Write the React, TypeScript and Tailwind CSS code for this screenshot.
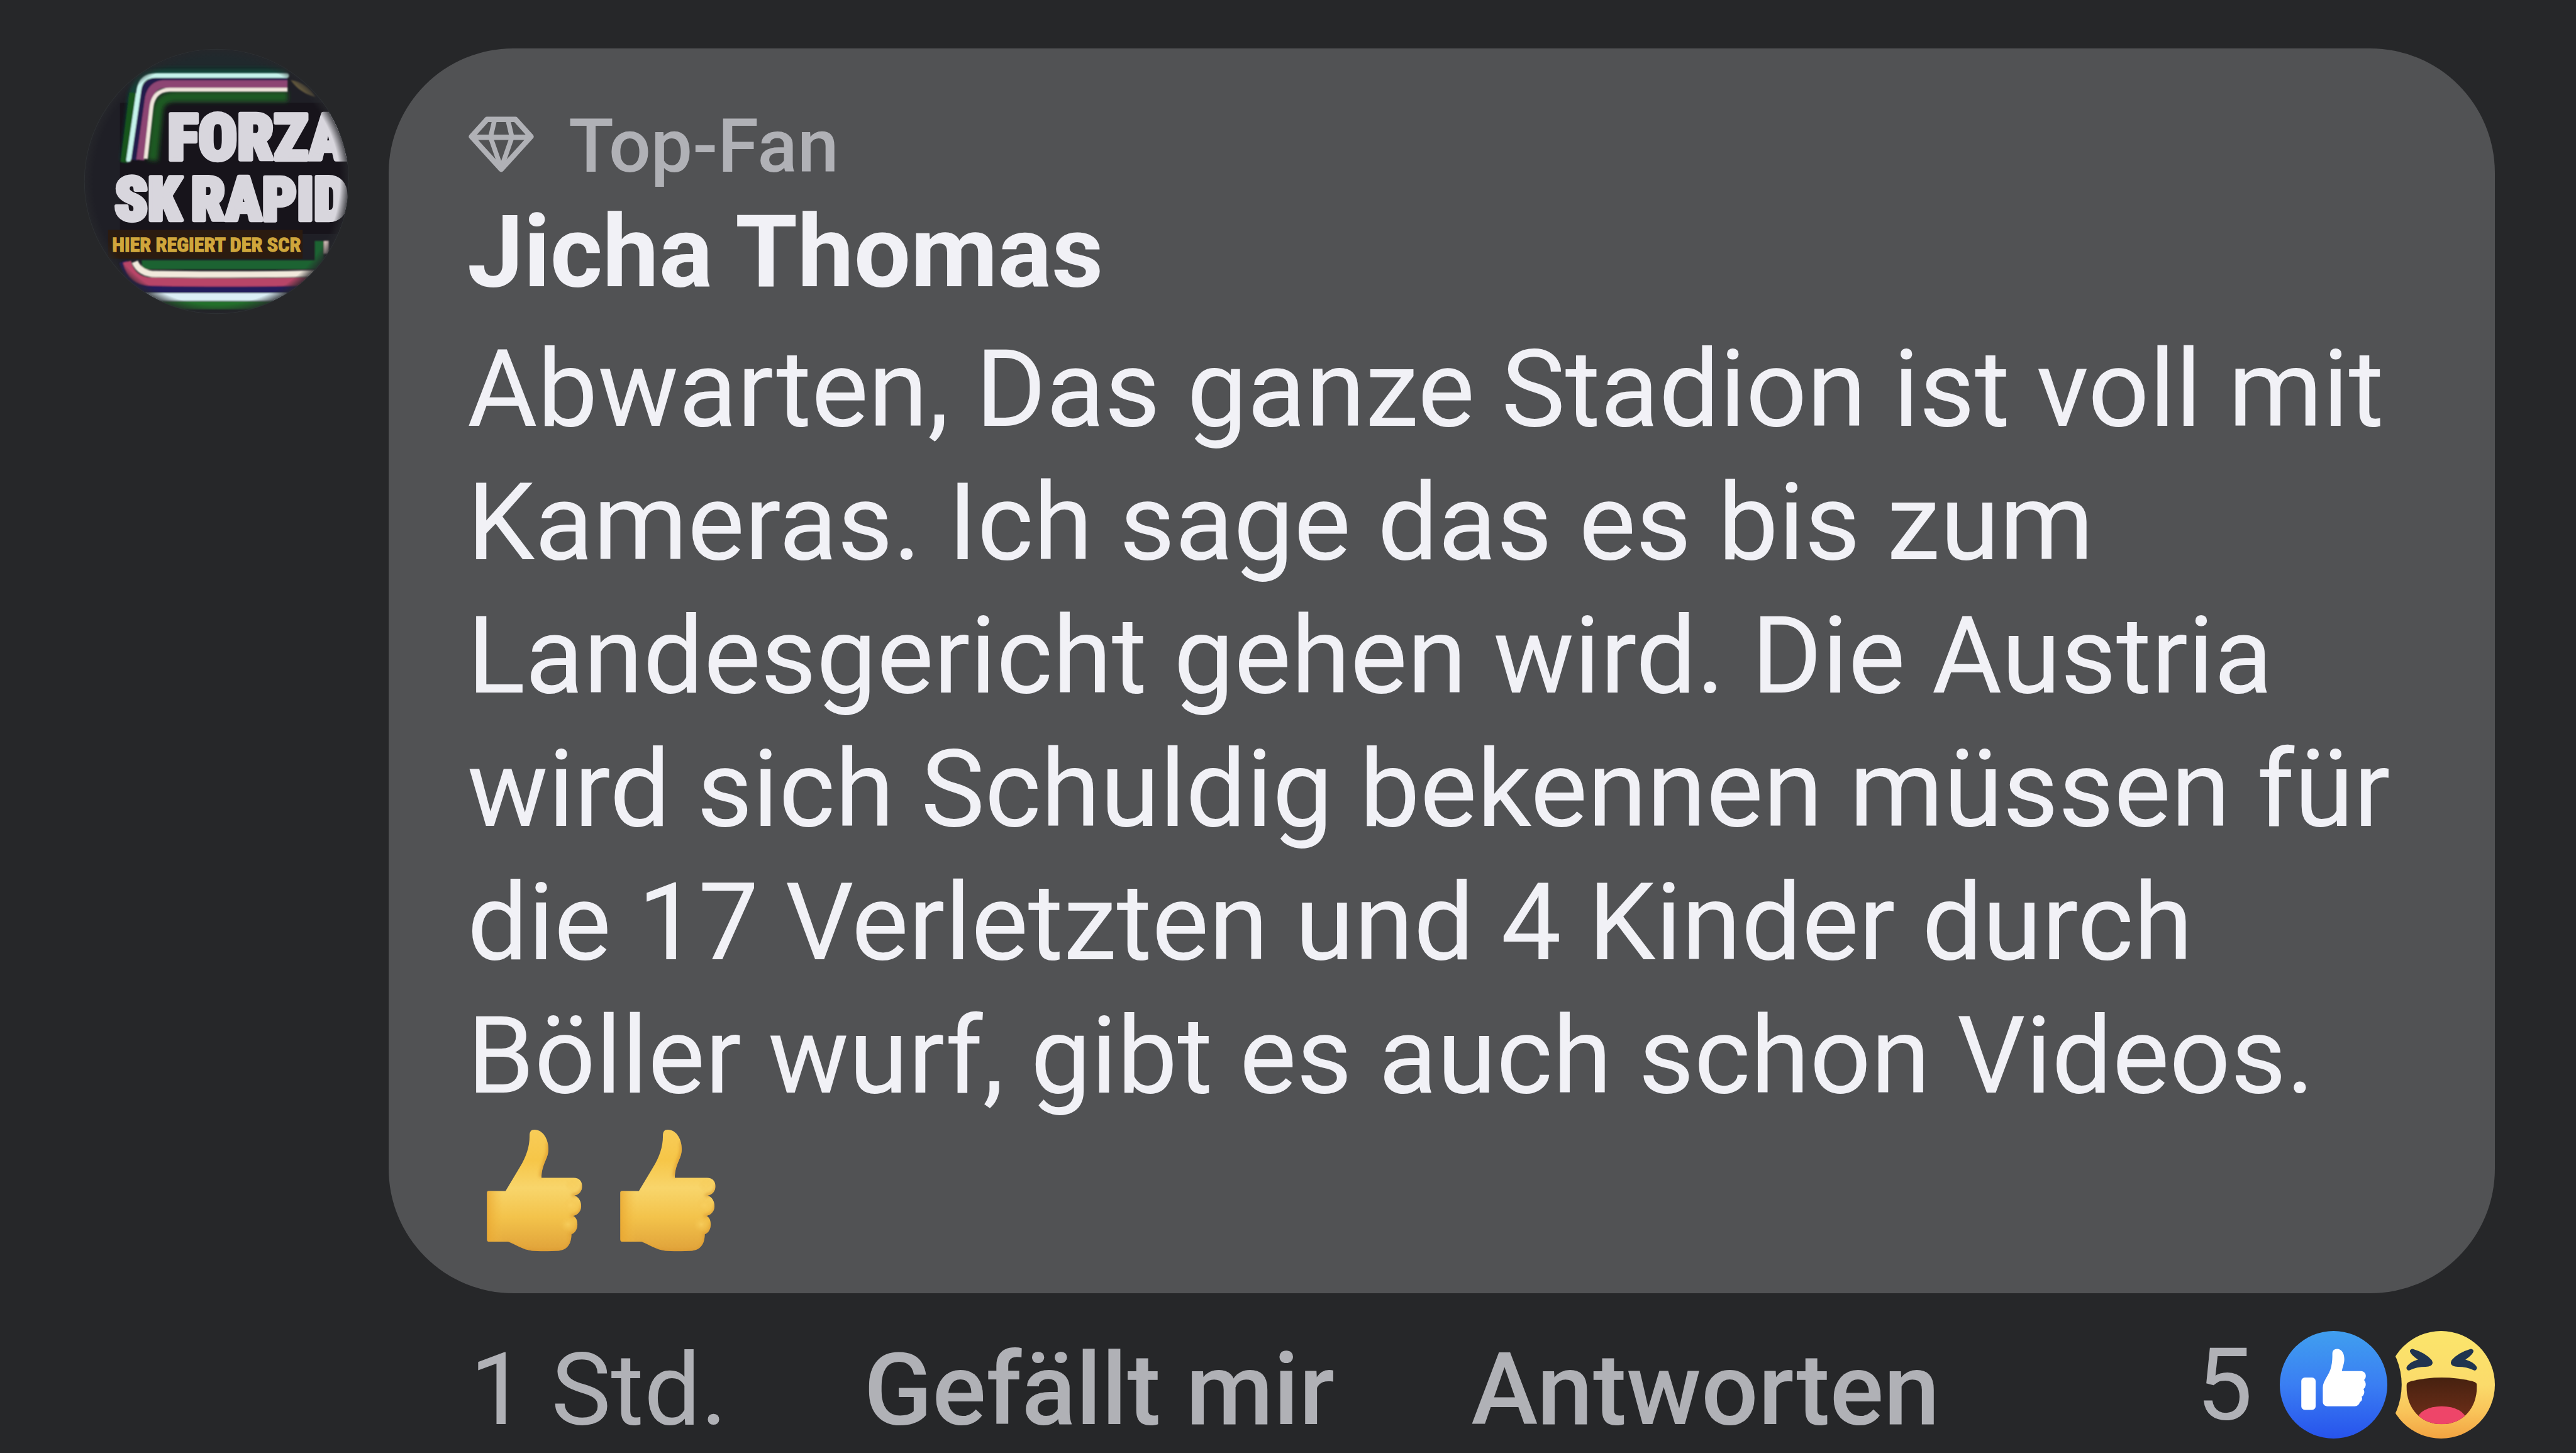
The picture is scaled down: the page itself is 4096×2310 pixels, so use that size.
import React from 'react';

const Avatar = () => (
  <svg viewBox="57 66 1340 1340" className="size-[423px] rounded-full" role="img" aria-label="Profilbild von Jicha Thomas">
    <defs>
      <clipPath id="avatar-clip">
        <circle cx="727" cy="736" r="664" />
      </clipPath>
      <filter id="neon" x="-10%" y="-10%" width="120%" height="120%">
        <feGaussianBlur stdDeviation="4" />
      </filter>
      <filter id="glow" x="-10%" y="-20%" width="120%" height="140%">
        <feGaussianBlur stdDeviation="12" />
      </filter>
      <radialGradient id="rim" cx="0.5" cy="0.5" r="0.5">
        <stop offset="0.93" stopColor="#26272b" stopOpacity="0" />
        <stop offset="1" stopColor="#26272b" stopOpacity="0.85" />
      </radialGradient>
    </defs>
    <circle cx="727" cy="736" r="668" fill="#2d3033" />
    <g clipPath="url(#avatar-clip)">
      <rect x="57" y="66" width="1340" height="1340" fill="#1f1f26" />
      <rect x="240" y="340" width="1160" height="660" fill="#17141b" />
      <rect x="300" y="70" width="800" height="90" fill="#20292d" />

      {/* upper neon tubes */}
      <g fill="none" strokeLinejoin="round">
        <g filter="url(#glow)">
          <path d="M262 630 L300 300 Q320 184 420 184 H1084" stroke="#0f4a3a" strokeWidth="30" />
          <path d="M404 630 L430 380 Q440 310 520 308 H1084" stroke="#1f5a24" strokeWidth="52" />
        </g>
        <g filter="url(#neon)">
          <path d="M260 640 L306 290" stroke="#17551d" strokeWidth="36" />
          <path d="M310 628 L356 300 Q370 232 430 228 H1084" stroke="#241f4b" strokeWidth="36" />
          <path d="M342 628 L386 316 Q400 250 460 246 H1084" stroke="#8d4573" strokeWidth="40" />
          <path d="M284 626 L336 270 Q348 202 420 202 H1080" stroke="#c6f4ec" strokeWidth="24" strokeLinecap="round" />
          <path d="M370 622 L398 370 Q406 276 490 274 H1084" stroke="#f0e6dc" strokeWidth="20" />
        </g>
      </g>
      <path d="M1100 225 C1150 230 1200 265 1225 310 C1180 300 1130 270 1100 225Z" fill="#6d6040" filter="url(#neon)" />

      {/* lower neon tubes */}
      <g fill="none" filter="url(#neon)">
        <path d="M350 1156 H1244 V1035" stroke="#1d6332" strokeWidth="46" />
        <path d="M1280 1035 V1100" stroke="#e6cfc8" strokeWidth="24" />
        <path d="M255 1140 Q300 1278 400 1280 H1180" stroke="#231f5c" strokeWidth="40" />
        <path d="M275 1140 Q300 1240 400 1240 Q740 1248 1180 1240" stroke="#b84467" strokeWidth="42" />
        <path d="M315 1140 Q340 1202 420 1202 Q740 1208 1220 1200" stroke="#f2e9dc" strokeWidth="32" />
        <path d="M360 1318 H1080" stroke="#dbeef6" strokeWidth="40" />
        <path d="M440 1360 H1020" stroke="#23702a" strokeWidth="42" />
      </g>

      {/* banner lettering */}
      <g className="font-['Roboto_Condensed','Liberation_Sans_Narrow','Roboto',sans-serif] font-black" fill="#d8d6dd" stroke="#d8d6dd" strokeWidth="20" strokeLinejoin="round">
        <text x="480" y="626" fontSize="325">FORZA</text>
        <text x="212" y="930" fontSize="305">SK</text>
        <text x="598" y="930" fontSize="305">RAPID</text>
      </g>
      <rect x="180" y="980" width="980" height="145" fill="#2b1b10" />
      <text
        x="200"
        y="1090"
        fontSize="102"
        className="font-['Roboto_Condensed','Liberation_Sans_Narrow','Roboto',sans-serif] font-bold"
        fill="#cfa63c"
        stroke="#cfa63c"
        strokeWidth="4"
      >
        HIER REGIERT DER SCR
      </text>
      <circle cx="727" cy="736" r="668" fill="url(#rim)" />
    </g>
  </svg>
);

const DiamondIcon = () => (
  <svg viewBox="0 0 110 96" className="h-[91px] w-[104px] mb-2" fill="none" stroke="currentColor" strokeWidth="9" strokeLinejoin="round" aria-hidden="true">
    <path d="M31 6 H79 L105 35 L55 90 L5 35 Z" />
    <path d="M6 36 H104" />
    <path d="M44 6 L37 36 L55 88 L73 36 L66 6" strokeWidth="8" />
  </svg>
);

const ThumbsUp = () => (
  <svg viewBox="69 93 672 672" className="inline size-[212px] align-top" role="img" aria-label="Daumen hoch">
    <defs>
      <linearGradient id="thumb-skin" x1="0" y1="128" x2="0" y2="740" gradientUnits="userSpaceOnUse">
        <stop offset="0" stopColor="#f8cc58" />
        <stop offset="0.25" stopColor="#f6c648" />
        <stop offset="0.48" stopColor="#f8d56b" />
        <stop offset="0.72" stopColor="#f3c34b" />
        <stop offset="1" stopColor="#e0a23a" />
      </linearGradient>
      <linearGradient id="thumb-wrist" x1="168" y1="0" x2="250" y2="0" gradientUnits="userSpaceOnUse">
        <stop offset="0" stopColor="#e9a62f" stopOpacity="0.8" />
        <stop offset="1" stopColor="#f2bb42" stopOpacity="0" />
      </linearGradient>
      <radialGradient id="thumb-finger">
        <stop offset="0" stopColor="#f8d060" stopOpacity="0.8" />
        <stop offset="1" stopColor="#f4c450" stopOpacity="0" />
      </radialGradient>
      <clipPath id="thumb-clip">
        <path d="M176 437 H262 L335 315 C365 265 383 215 383 160 C383 138 390 128 408 128 C450 128 478 175 478 225 C478 275 443 300 443 370 H605 C635 370 648 390 648 412 C648 437 632 455 608 460 C632 467 643 490 643 512 C643 540 625 557 602 562 C618 570 624 585 624 605 C624 630 612 648 594 655 C594 668 592 682 588 694 C578 720 560 735 530 738 C480 741 430 741 395 738 C350 733 310 705 275 692 H178 Q168 692 168 680 V447 Q168 437 176 437Z" />
      </clipPath>
      <filter id="thumb-soft" x="-50%" y="-50%" width="200%" height="200%">
        <feGaussianBlur stdDeviation="9" />
      </filter>
    </defs>
    <g clipPath="url(#thumb-clip)">
      <rect x="160" y="120" width="500" height="630" fill="url(#thumb-skin)" />
      <rect x="160" y="430" width="100" height="270" fill="url(#thumb-wrist)" />
      <g fill="none" stroke="#d9962c" strokeWidth="16" strokeOpacity="0.75" filter="url(#thumb-soft)">
        <path d="M476 190 C486 260 446 290 440 366" />
        <path d="M654 400 C652 440 630 458 596 458" />
        <path d="M650 500 C647 545 622 562 590 562" />
        <path d="M632 590 C630 640 607 657 582 658" />
        <path d="M270 700 C340 750 420 748 540 744 C580 736 594 700 596 670" />
      </g>
      <ellipse cx="600" cy="408" rx="40" ry="34" fill="url(#thumb-finger)" />
      <ellipse cx="592" cy="508" rx="42" ry="38" fill="url(#thumb-finger)" />
      <ellipse cx="576" cy="605" rx="40" ry="38" fill="url(#thumb-finger)" />
    </g>
  </svg>
);

const LikeReaction = () => (
  <svg viewBox="0 0 180 180" className="size-[171px]" role="img" aria-label="Gefällt mir">
    <defs>
      <linearGradient id="like-bg" x1="0" y1="0" x2="0" y2="1">
        <stop offset="0" stopColor="#409fef" />
        <stop offset="0.5" stopColor="#3a7ef3" />
        <stop offset="1" stopColor="#2753ec" />
      </linearGradient>
    </defs>
    <circle cx="90" cy="90" r="90" fill="url(#like-bg)" />
    <rect x="36" y="78" width="24" height="54" rx="6" fill="#fff" />
    <path
      d="M96 30 C103 30 108 37 108 47 C108 55 105 60 104 67 H136 C141 67 144 71 144 75 C144 78 143 80 141 82 C145 86 145 94 140 97 C143 102 141 108 137 110 C139 114 137 118 134 119 C133 123 130 126 125 126 H80 C75 126 72 123 72 118 V95 C72 83 83 74 86 60 C88 52 88 45 88 38 C88 33 91 30 96 30Z"
      fill="#fff"
    />
  </svg>
);

const HahaReaction = () => (
  <svg viewBox="0 0 180 180" className="size-[171px]" role="img" aria-label="Haha">
    <defs>
      <linearGradient id="haha-face" x1="0" y1="0" x2="0" y2="1">
        <stop offset="0" stopColor="#fbe56b" />
        <stop offset="0.5" stopColor="#fbdb6b" />
        <stop offset="0.75" stopColor="#f9c45a" />
        <stop offset="1" stopColor="#f2a341" />
      </linearGradient>
      <linearGradient id="haha-mouth" x1="0" y1="0" x2="0" y2="1">
        <stop offset="0" stopColor="#43200f" />
        <stop offset="1" stopColor="#74301a" />
      </linearGradient>
      <mask id="haha-notch">
        <rect width="180" height="180" fill="#fff" />
        <circle cx="-90" cy="90" r="114" fill="#000" />
      </mask>
      <clipPath id="haha-mouth-clip">
        <path d="M32 92 C32 87 34 86 40 84 Q91 72 142 84 C148 86 150 87 150 92 C150 131 125 156 91 156 C57 156 32 131 32 92Z" />
      </clipPath>
    </defs>
    <circle cx="90" cy="90" r="90" fill="url(#haha-face)" mask="url(#haha-notch)" />
    <g fill="#20344f" stroke="#20344f" strokeWidth="8" strokeLinecap="round" strokeLinejoin="round">
      <path d="M42 34 C52 37 64 43 71 51 C73 55 69 56 64 56 C54 56 44 58 36 62 C40 55 50 52 60 50 C54 44 46 41 42 34Z" />
      <path d="M140 34 C130 37 118 43 111 51 C109 55 113 56 118 56 C128 56 138 58 146 62 C142 55 132 52 122 50 C128 44 136 41 140 34Z" />
    </g>
    <g clipPath="url(#haha-mouth-clip)">
      <rect x="30" y="72" width="122" height="86" fill="url(#haha-mouth)" />
      <ellipse cx="91" cy="149" rx="41" ry="23" fill="#ee4569" />
    </g>
  </svg>
);

const App = () => {
  return (
    <div className="min-h-screen bg-[#262729] font-['Roboto',sans-serif] text-[#f1f1f6]">
      <article className="flex items-start gap-[62px] pt-[77px] pl-[133px] pr-[129px]">
        <a href="#profil" className="shrink-0">
          <Avatar />
        </a>

        <div className="flex-1 min-w-0">
          {/* Comment bubble */}
          <div className="rounded-[198px] bg-[#515254] pt-[84px] pb-[59px] px-[125px]">
            <div className="flex items-center gap-[55px] pl-0.5 text-[#b0b1b6]">
              <DiamondIcon />
              <span className="text-[118px] leading-[144px] font-medium">Top-Fan</span>
            </div>
            <h2 className="text-[160px] leading-[192px] font-bold">
              <a href="#profil">Jicha Thomas</a>
            </h2>
            <p className="mt-4 text-[171px] leading-[212px]">
              Abwarten, Das ganze Stadion ist voll mit Kameras. Ich sage das es bis zum
              Landesgericht gehen wird. Die Austria wird sich Schuldig bekennen müssen für
              die 17 Verletzten und 4 Kinder durch Böller wurf, gibt es auch schon Videos.{' '}
              <span className="whitespace-nowrap">
                <ThumbsUp />
                <ThumbsUp />
              </span>
            </p>
          </div>

          {/* Actions */}
          <div className="flex items-start justify-between mt-[60px] pl-[129px] text-[160px] text-[#b0b1b6]">
            <div className="flex gap-[217px] leading-[188px]">
              <time>1 Std.</time>
              <button type="button" className="font-medium">Gefällt mir</button>
              <button type="button" className="font-medium">Antworten</button>
            </div>
            <div className="flex items-center leading-[171px]">
              <span className="mr-[43px]">5</span>
              <LikeReaction />
              <HahaReaction />
            </div>
          </div>
        </div>
      </article>
    </div>
  );
};

export default App;
